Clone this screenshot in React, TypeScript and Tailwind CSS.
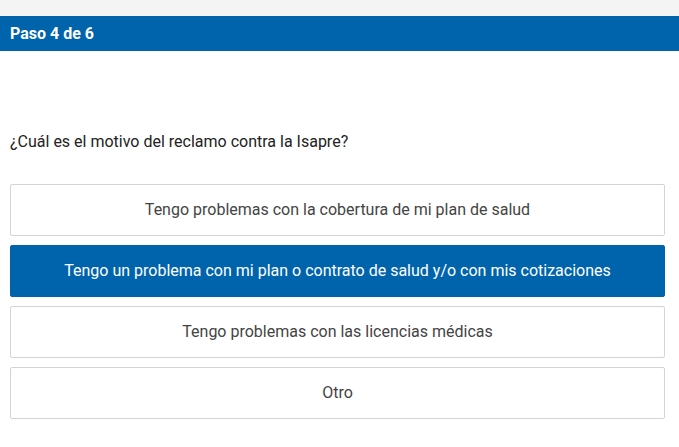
const options = [
  "Tengo problemas con la cobertura de mi plan de salud",
  "Tengo un problema con mi plan o contrato de salud y/o con mis cotizaciones",
  "Tengo problemas con las licencias médicas",
  "Otro",
];

export default function App() {
  const selected = 1;

  return (
    <div className="min-h-[447px] bg-white font-['Roboto',sans-serif]">
      <div className="h-4 bg-[#f4f4f4]" />
      <div className="h-[35px] bg-[#0064ad] px-[10px] flex items-center">
        <span className="text-white font-bold text-[16px]">Paso 4 de 6</span>
      </div>

      <div className="pl-[10px] pr-[14px]">
        <p className="mt-[80px] text-[16px] text-[#222] leading-[22px]">
          ¿Cuál es el motivo del reclamo contra la Isapre?
        </p>

        <div className="mt-[31px] flex flex-col gap-[9px]">
          {options.map((opt, i) => (
            <button
              key={opt}
              className={
                i === selected
                  ? "h-[52px] w-full rounded-[2px] border border-[#0064ad] bg-[#0064ad] text-white text-[16px]"
                  : "h-[52px] w-full rounded-[2px] border border-[#d4d4d4] bg-white text-[#444] text-[16px]"
              }
            >
              {opt}
            </button>
          ))}
        </div>
      </div>
    </div>
  );
}
